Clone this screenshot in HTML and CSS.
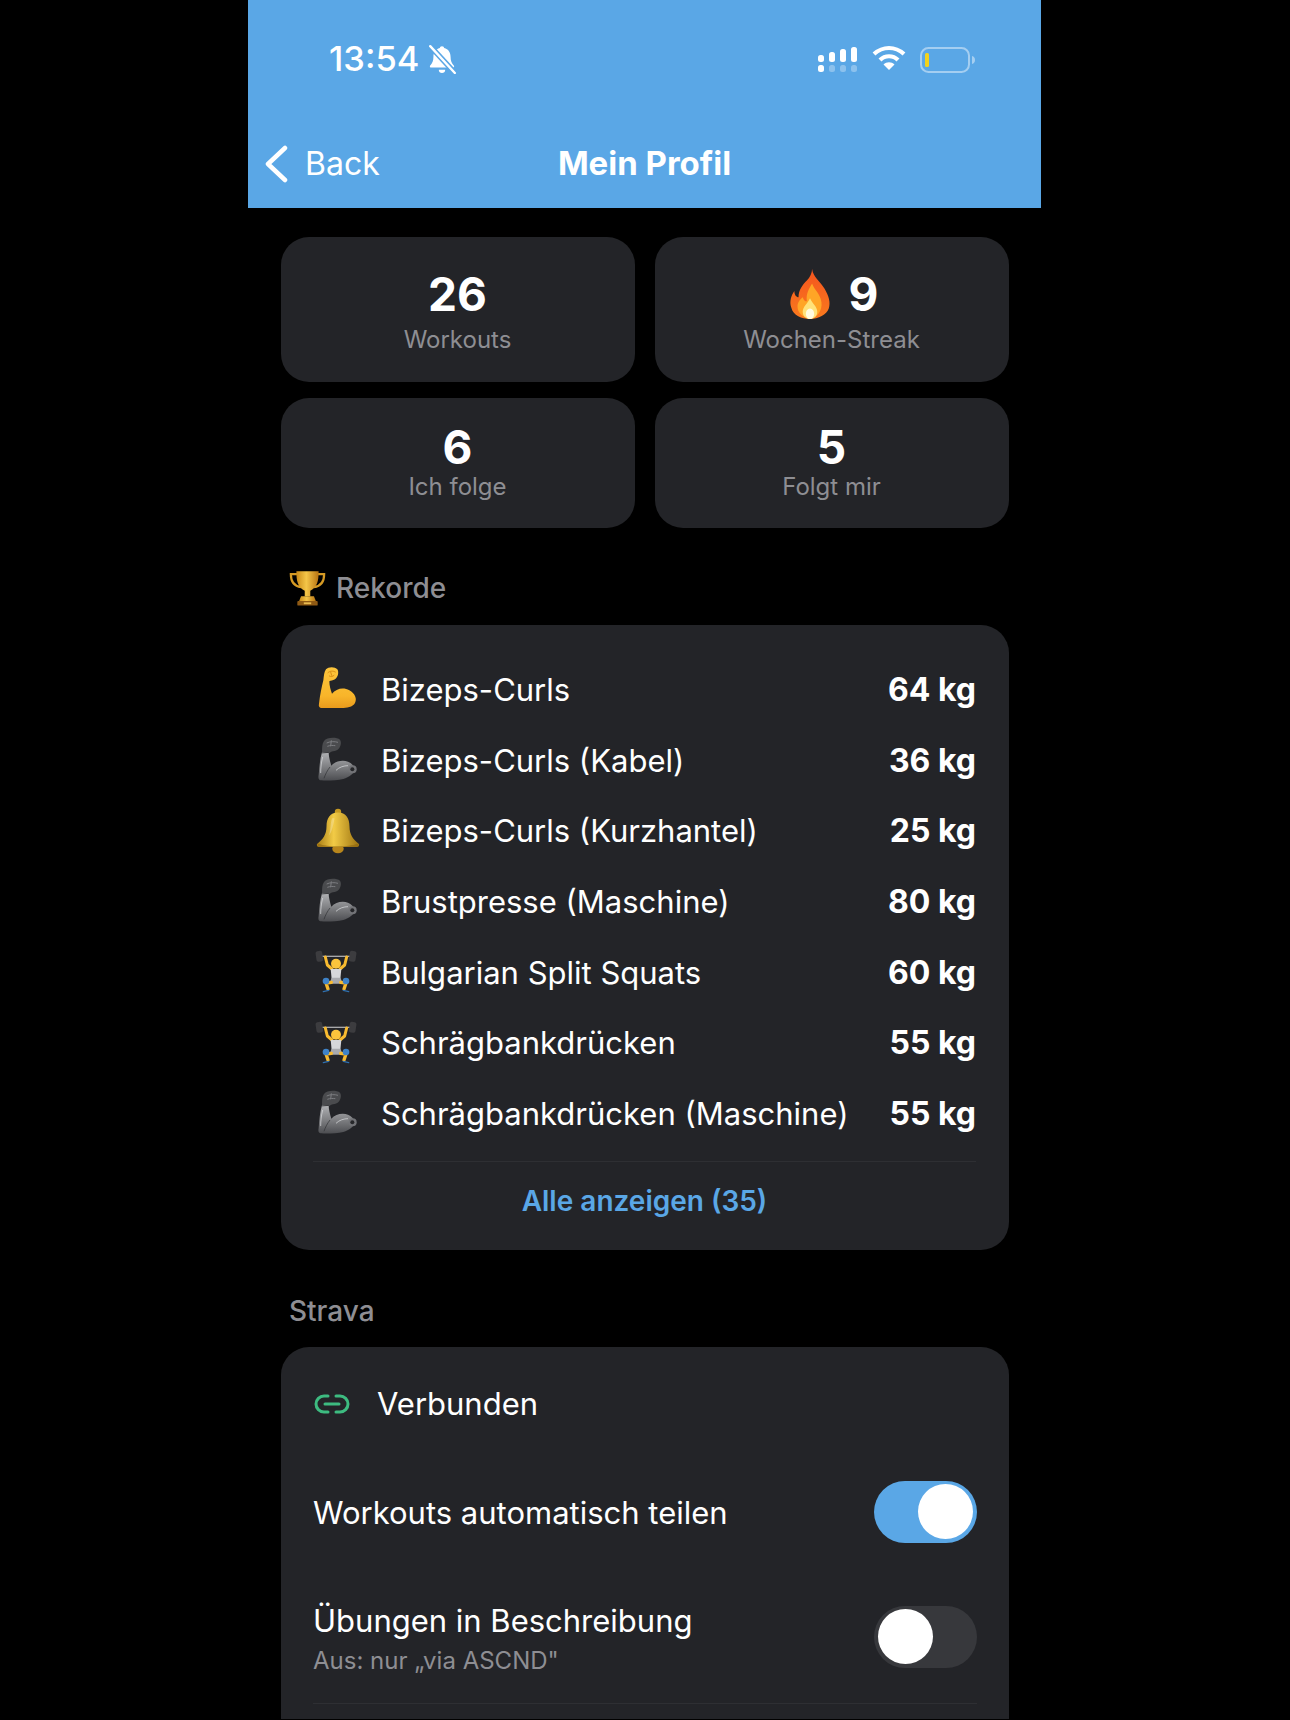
FILE: index.html
```html
<!DOCTYPE html>
<html lang="de">
<head>
    <meta charset="UTF-8">
    <title>Mein Profil</title>
    <link rel="stylesheet" href="styles.css">
</head>
<body>
    <svg class="defs" width="0" height="0">
        <defs>
            <linearGradient id="g-arm" x1="0" y1="0" x2="0" y2="1">
                <stop offset="0" stop-color="#fcc53c"/>
                <stop offset=".7" stop-color="#f8b52a"/>
                <stop offset="1" stop-color="#e99a1c"/>
            </linearGradient>
            <linearGradient id="g-metal" x1="0" y1="0" x2="0" y2="1">
                <stop offset="0" stop-color="#b0b1b4"/>
                <stop offset=".5" stop-color="#808184"/>
                <stop offset="1" stop-color="#4c4d51"/>
            </linearGradient>
            <linearGradient id="g-bell" x1="0" y1="0" x2="1" y2="0">
                <stop offset="0" stop-color="#a87c14"/>
                <stop offset=".4" stop-color="#f2cb46"/>
                <stop offset="1" stop-color="#9c7210"/>
            </linearGradient>
            <linearGradient id="g-flame" x1="0" y1="0" x2="0" y2="1">
                <stop offset="0" stop-color="#f4541e"/>
                <stop offset="1" stop-color="#f97a1e"/>
            </linearGradient>
            <linearGradient id="g-cup" x1="0" y1="0" x2="1" y2="0">
                <stop offset="0" stop-color="#c98a18"/>
                <stop offset=".45" stop-color="#f4c648"/>
                <stop offset="1" stop-color="#b87412"/>
            </linearGradient>
            <symbol id="muscle" viewBox="15 22 138 138">
                <path fill="url(#g-arm)" d="M48 32C55 24 75 24 82 32 87 40 85 55 75 62 68 66 62 66 58 68 58 80 62 95 66 105 78 90 100 84 118 95 135 105 142 120 135 133 128 146 110 148 95 148L35 148C28 148 25 142 27 135 30 110 35 85 40 65 42 50 42 40 48 32Z"/>
                <path fill="none" stroke="#d98c14" stroke-width="3" stroke-linecap="round" d="M54 42c6-6 16-6 22-2M58 52c5 3 10 2 14-2M62 40l3 10"/>
            </symbol>
            <symbol id="mech" viewBox="15 22 138 138">
                <path fill="url(#g-metal)" d="M36 68L56 68C56 80 60 95 64 108 76 94 98 90 114 96 124 100 132 108 135 118 132 132 118 142 100 148 80 152 50 154 34 152 26 152 24 146 26 136 28 112 30 88 36 68Z"/>
                <path fill="#4a4b4e" d="M42 34C50 22 80 22 90 30 96 38 92 56 80 62 72 66 66 64 58 70L36 68C36 54 36 42 42 34Z"/>
                <path fill="none" stroke="#7c7d81" stroke-width="3" d="M50 40c10-5 24-5 34-2M52 50c8-3 16-3 24-2M64 32l-2 18"/>
                <path fill="none" stroke="#dcdde0" stroke-width="3" opacity=".7" d="M38 82c-4 16-6 32-6 48M78 122c10-10 24-14 36-14"/>
                <path fill="none" stroke="#2e2f32" stroke-width="2" d="M36 70l20-2M60 112c-8 10-14 22-18 34"/>
                <circle cx="128" cy="119" r="12" fill="#727377"/>
                <circle cx="127" cy="119" r="6" fill="#26272a"/>
            </symbol>
            <symbol id="bell" viewBox="0 0 40 40">
                <circle cx="20" cy="3.500" r="2.800" fill="#c79a22"/>
                <ellipse cx="20" cy="35.500" rx="5" ry="3.800" fill="#b8861c"/>
                <path fill="url(#g-bell)" d="M20 4c7 0 10 5 10 12 0 7 3 11 8 15 1 1 0 3-2 3H4c-2 0-3-2-2-3 5-4 8-8 8-15C10 9 13 4 20 4z"/>
                <path fill="#fff" opacity=".25" d="M15 9c-2 4-1 10-3 15 3-3 4-10 5-15z"/>
                <path fill="#8c6410" opacity=".6" d="M3 31c8 3 26 3 34 0 1 1 1 3-1 3H4c-2 0-2-2-1-3z"/>
            </symbol>
            <symbol id="lifter" viewBox="15 22 138 138">
                <rect x="30" y="42" width="100" height="4" fill="#a8a8ab"/>
                <rect x="18" y="28" width="20" height="32" rx="6" fill="#3c3c3f" transform="rotate(-8 28 44)"/>
                <rect x="118" y="28" width="20" height="32" rx="6" fill="#3c3c3f" transform="rotate(8 128 44)"/>
                <path fill="none" stroke="#f8bb30" stroke-width="9" stroke-linecap="round" stroke-linejoin="round" d="M46 46l6 24 14 12M110 46l-6 24-14 12"/>
                <circle cx="78" cy="66" r="15" fill="#fcc53c"/>
                <path fill="#d6d7da" d="M62 82h32l-3 30H65z"/>
                <path fill="#a9aaae" d="M65 108h26l8 18H58z"/>
                <path fill="none" stroke="#f8bb30" stroke-width="10" stroke-linecap="round" d="M64 122l-16 2 6 18M92 122l16 2-6 18"/>
                <circle cx="48" cy="118" r="10" fill="#3f83c8"/>
                <circle cx="108" cy="118" r="10" fill="#3f83c8"/>
                <path fill="none" stroke="#2f6fae" stroke-width="4" stroke-linecap="round" d="M40 150l16-4M100 146l16 4"/>
            </symbol>
        </defs>
    </svg>

    <div class="phone">
        <header class="topbar">
            <div class="statusbar">
                <div class="status-left">
                    <span class="time">13:54</span>
                    <svg class="mute" viewBox="0 0 28 28">
                        <path fill="#fff" d="M14 2c1.300 0 2 .8 2 1.800 4 1 6 4.200 6 8.200 0 4 1 6 3 8 .7 1 .2 2-1 2H4c-1.200 0-1.700-1-1-2 2-2 3-4 3-8 0-4 2-7.200 6-8.200C12 2.800 12.700 2 14 2zM11 24h6c0 2-1.300 3-3 3s-3-1-3-3z"/>
                        <path stroke="#5aa7e6" stroke-width="5" d="M3 2l23 25"/>
                        <path stroke="#fff" stroke-width="2.200" stroke-linecap="round" d="M3 2l23 25"/>
                    </svg>
                </div>
                <div class="status-right">
                    <svg class="signal" viewBox="0 0 40 28">
                        <g fill="#fff">
                            <rect x="0" y="8" width="6" height="7" rx="2.500"/>
                            <rect x="11" y="5" width="6" height="10" rx="2.500"/>
                            <rect x="22" y="2" width="6" height="13" rx="2.500"/>
                            <rect x="33" y="0" width="6" height="15" rx="2.500"/>
                            <rect x="0" y="18" width="6" height="7" rx="2.500"/>
                        </g>
                        <g fill="#fff" opacity=".3">
                            <rect x="11" y="18" width="6" height="7" rx="2.500"/>
                            <rect x="22" y="18" width="6" height="7" rx="2.500"/>
                            <rect x="33" y="18" width="6" height="7" rx="2.500"/>
                        </g>
                    </svg>
                    <svg class="wifi" viewBox="0 0 34 26">
                        <path fill="none" stroke="#fff" stroke-width="4.200" d="M2 9c9-8 21-8 30 0M8 15c5-5 13-5 18 0"/>
                        <path fill="#fff" d="M11.500 19.500c3-3 8-3 11 0L17 25z"/>
                    </svg>
                    <svg class="battery" viewBox="0 0 56 28">
                        <rect x="1" y="2" width="48" height="24" rx="7.500" fill="none" stroke="#fff" stroke-opacity=".45" stroke-width="2"/>
                        <rect x="5" y="7" width="4" height="14" rx="1.500" fill="#f2d21c"/>
                        <path d="M52 10c2 .5 3 2 3 4s-1 3.500-3 4z" fill="#fff" fill-opacity=".45"/>
                    </svg>
                </div>
            </div>
            <div class="navbar">
                <div class="back">
                    <svg class="chevron" viewBox="0 0 24 38">
                        <path fill="none" stroke="#fff" stroke-width="4.500" stroke-linecap="round" stroke-linejoin="round" d="M21 3L4 19l17 16"/>
                    </svg>
                    <span>Back</span>
                </div>
                <div class="nav-title">Mein Profil</div>
            </div>
        </header>

        <main class="content">
            <section class="stats">
                <div class="stat stat-tall">
                    <div class="stat-num">26</div>
                    <div class="stat-label">Workouts</div>
                </div>
                <div class="stat stat-tall">
                    <div class="stat-num stat-streak">
                        <svg class="flame" viewBox="0 0 40 48">
                            <path fill="url(#g-flame)" d="M22 0C23 8 30 12 34 19 38 26 40 32 38 38 36 44 28 48 20 48 12 48 4 45 2 37 0 31 2 25 5 21 5 25 7 27 9 27 9 20 13 15 17 11 20 8 22 4 22 0Z"/>
                            <path fill="#ffa526" d="M22 14C24 20 30 24 31 32 32 40 27 47 20 47 13 47 8 42 8 36 8 31 11 29 13 27 14 30 15 31 17 31 16 24 19 19 22 14Z"/>
                            <path fill="#ffe27a" d="M20 28C22 33 27 36 27 41 27 45 24 48 20 48 16 48 13 45 13 41 13 36 18 33 20 28Z"/>
                            <ellipse cx="20" cy="43" rx="4" ry="5" fill="#fffbe0"/>
                        </svg>
                        <span>9</span>
                    </div>
                    <div class="stat-label">Wochen-Streak</div>
                </div>
                <div class="stat stat-short">
                    <div class="stat-num">6</div>
                    <div class="stat-label">Ich folge</div>
                </div>
                <div class="stat stat-short">
                    <div class="stat-num">5</div>
                    <div class="stat-label">Folgt mir</div>
                </div>
            </section>

            <h2 class="section-title section-records">
                <svg class="trophy" viewBox="0 0 40 40">
                    <path fill="none" stroke="#d59a24" stroke-width="2.400" d="M9 5H2c0 8 4 13 11 14M31 5h7c0 8-4 13-11 14"/>
                    <path fill="url(#g-cup)" d="M8 2h24c0 10-1 17-9 21v6h-6v-6C9 19 8 12 8 2z"/>
                    <path fill="url(#g-cup)" d="M13 29h14l2 5H11z"/>
                    <rect x="9" y="34" width="22" height="5" rx="1" fill="#8f5a14"/>
                    <rect x="16" y="35.500" width="8" height="2" fill="#e8bb50"/>
                </svg>
                Rekorde
            </h2>

            <section class="card records">
                <div class="record">
                    <svg class="emoji"><use href="#muscle"/></svg>
                    <span class="record-name">Bizeps-Curls</span>
                    <span class="record-value">64 kg</span>
                </div>
                <div class="record">
                    <svg class="emoji"><use href="#mech"/></svg>
                    <span class="record-name">Bizeps-Curls (Kabel)</span>
                    <span class="record-value">36 kg</span>
                </div>
                <div class="record">
                    <svg class="emoji"><use href="#bell"/></svg>
                    <span class="record-name">Bizeps-Curls (Kurzhantel)</span>
                    <span class="record-value">25 kg</span>
                </div>
                <div class="record">
                    <svg class="emoji"><use href="#mech"/></svg>
                    <span class="record-name">Brustpresse (Maschine)</span>
                    <span class="record-value">80 kg</span>
                </div>
                <div class="record">
                    <svg class="emoji"><use href="#lifter"/></svg>
                    <span class="record-name">Bulgarian Split Squats</span>
                    <span class="record-value">60 kg</span>
                </div>
                <div class="record">
                    <svg class="emoji"><use href="#lifter"/></svg>
                    <span class="record-name">Schrägbankdrücken</span>
                    <span class="record-value">55 kg</span>
                </div>
                <div class="record">
                    <svg class="emoji"><use href="#mech"/></svg>
                    <span class="record-name">Schrägbankdrücken (Maschine)</span>
                    <span class="record-value">55 kg</span>
                </div>
                <div class="show-all">Alle anzeigen (35)</div>
            </section>

            <h2 class="section-title section-strava">Strava</h2>

            <section class="card strava">
                <div class="connected">
                    <svg class="link-icon" viewBox="0 0 36 22">
                        <path fill="none" stroke="#3dbb80" stroke-width="3" stroke-linecap="round" d="M14 3H10a8 8 0 0 0 0 16h4M22 3h4a8 8 0 0 1 0 16h-4M11 11h14"/>
                    </svg>
                    <span>Verbunden</span>
                </div>
                <div class="setting setting-auto">
                    <span class="setting-name">Workouts automatisch teilen</span>
                    <div class="toggle toggle-on"><div class="knob"></div></div>
                </div>
                <div class="setting setting-desc">
                    <div class="setting-text">
                        <div class="setting-name">Übungen in Beschreibung</div>
                        <div class="setting-sub">Aus: nur „via ASCND"</div>
                    </div>
                    <div class="toggle"><div class="knob"></div></div>
                </div>
                <div class="divider"></div>
            </section>
        </main>
    </div>
</body>
</html>
```

FILE: styles.css
```css
* {
    box-sizing: border-box;
}
html, body {
    margin: 0;
    height: 1720px;
    overflow: hidden;
    background-color: #000;
}
body {
    font-family: Inter, "Liberation Sans", sans-serif;
    color: #fff;
}
.defs {
    display: block;
    height: 0;
}
.phone {
    width: 793px;
    margin-left: 248px;
}

/* top bar */
.topbar {
    height: 208px;
    background-color: #5aa7e6;
}
.statusbar {
    height: 118px;
    padding: 40px 65px 0 81px;
    display: flex;
    justify-content: space-between;
    align-items: flex-start;
}
.status-left {
    display: flex;
    align-items: center;
    gap: 8px;
}
.time {
    font-size: 34.5px;
    font-weight: 500;
    line-height: 38px;
}
.mute {
    width: 30px;
    height: 30px;
}
.status-right {
    display: flex;
    align-items: center;
    margin-top: 5px;
    gap: 14px;
}
.signal {
    width: 40px;
    height: 28px;
}
.wifi {
    width: 34px;
    height: 26px;
    margin-bottom: 6px;
}
.battery {
    width: 56px;
    height: 28px;
    margin-bottom: 2px;
}
.navbar {
    height: 90px;
    display: flex;
    align-items: center;
    justify-content: center;
    position: relative;
}
.back {
    position: absolute;
    left: 16px;
    top: 26px;
    display: flex;
    align-items: center;
    gap: 17px;
    font-size: 32px;
}
.chevron {
    width: 24px;
    height: 38px;
}
.nav-title {
    font-size: 33px;
    font-weight: 700;
}

/* content */
.content {
    padding: 29px 32px 0 33px;
}
.stats {
    display: grid;
    grid-template-columns: 1fr 1fr;
    gap: 16px 20px;
}
.stat {
    background-color: #232428;
    border-radius: 28px;
    display: flex;
    flex-direction: column;
    align-items: center;
    justify-content: center;
    padding-right: 1px;
}
.stat-tall {
    height: 145px;
    padding-top: 2px;
}
.stat-short {
    height: 130px;
    padding-bottom: 6px;
}
.stat-num {
    display: flex;
    align-items: center;
    gap: 16px;
    font-size: 46px;
    font-weight: 700;
    line-height: 56px;
}
.stat-streak {
    gap: 18px;
    padding-left: 4px;
}
.stat-label {
    font-size: 24px;
    line-height: 30px;
    color: #8e8e93;
}
.stat-tall .stat-label {
    margin-top: 3px;
}
.stat-short .stat-label {
    margin-top: -3px;
}
.flame {
    width: 42px;
    height: 50px;
}
.section-title {
    margin: 0;
    font-size: 28px;
    font-weight: 500;
    color: #8e8e93;
    display: flex;
    align-items: center;
    gap: 10px;
    padding-left: 8px;
}
.section-records {
    margin-top: 41px;
    margin-bottom: 18px;
    height: 38px;
}
.section-strava {
    margin-top: 43px;
    margin-bottom: 18px;
    height: 36px;
}
.trophy {
    width: 37px;
    height: 38px;
}
.card {
    background-color: #232428;
    border-radius: 28px;
}

/* records */
.records {
    height: 625px;
    padding: 29px 33px 0 32px;
}
.record {
    height: 70.7px;
    display: flex;
    align-items: center;
    font-size: 31px;
}
.emoji {
    width: 46px;
    height: 46px;
    flex: none;
    margin: 0 20px 0 2px;
}
.record-name {
    flex: 1;
}
.record-value {
    font-size: 32px;
    font-weight: 700;
}
.show-all {
    margin-top: 12px;
    border-top: 1px solid #2e2f33;
    height: 80px;
    line-height: 78px;
    text-align: center;
    font-size: 28px;
    font-weight: 600;
    color: #5aa7e6;
}

/* strava */
.strava {
    padding: 0 32px;
    height: 372px;
    border-radius: 28px 28px 0 0;
}
.connected {
    height: 111px;
    padding-top: 2px;
    display: flex;
    align-items: center;
    gap: 27px;
    font-size: 31px;
}
.link-icon {
    width: 36px;
    height: 22px;
    margin-left: 1px;
}
.setting {
    display: flex;
    align-items: center;
    justify-content: space-between;
    height: 108px;
}
.setting-auto .setting-name {
    margin-top: 2px;
}
.setting-desc {
    margin-top: 17px;
}
.setting-text {
    margin-top: 4px;
}
.setting-name {
    font-size: 31px;
    line-height: 38px;
}
.setting-sub {
    font-size: 24px;
    line-height: 30px;
    color: #8e8e93;
    margin-top: 6px;
}
.toggle {
    width: 103px;
    height: 62px;
    border-radius: 31px;
    background-color: #37383c;
    padding: 3px 4px;
    display: flex;
}
.toggle-on {
    background-color: #5aa7e6;
    justify-content: flex-end;
}
.knob {
    width: 55px;
    height: 55px;
    border-radius: 50%;
    background-color: #fff;
}
.divider {
    height: 1px;
    margin-top: 12px;
    background-color: #2e2f33;
}
```
